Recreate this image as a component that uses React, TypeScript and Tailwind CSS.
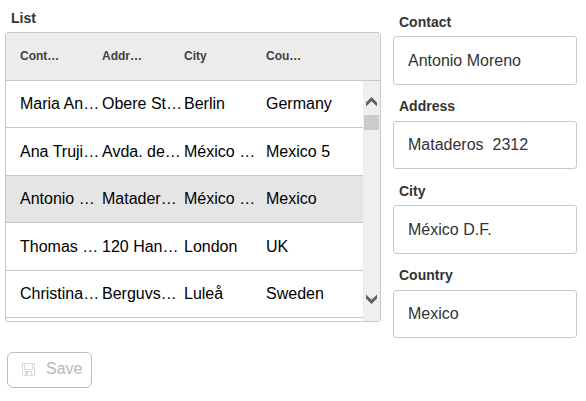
import React from "react";

type Row = { cells: string[]; height: string; selected?: boolean };

const columns = ["Cont…", "Addr…", "City", "Cou…"];

const rows: Row[] = [
  { cells: ["Maria An…", "Obere St…", "Berlin", "Germany"], height: "h-[47px]" },
  { cells: ["Ana Truji…", "Avda. de…", "México …", "Mexico 5"], height: "h-12" },
  { cells: ["Antonio …", "Matader…", "México …", "Mexico"], height: "h-[47px]", selected: true },
  { cells: ["Thomas …", "120 Han…", "London", "UK"], height: "h-12" },
  { cells: ["Christina…", "Berguvs…", "Luleå", "Sweden"], height: "h-[47px]" },
];

const fields = [
  { label: "Contact", value: "Antonio Moreno", labelGap: "mb-1.5", gap: "mb-[13px]", height: "h-[49px]" },
  { label: "Address", value: "Mataderos  2312", labelGap: "mb-[7px]", gap: "mb-3.5", height: "h-12" },
  { label: "City", value: "México D.F.", labelGap: "mb-1.5", gap: "mb-[13px]", height: "h-[49px]" },
  { label: "Country", value: "Mexico", labelGap: "mb-[7px]", gap: "", height: "h-12" },
];

function Chevron({ down = false }: { down?: boolean }) {
  return (
    <svg width="11" height="10" viewBox="0 0 11 10" className={down ? "rotate-180" : ""}>
      <path d="M0 5.6 5.5 0 11 5.6V9.6L5.5 4.3 0 9.6Z" fill="#606060" />
    </svg>
  );
}

function SaveIcon() {
  return (
    <svg width="13" height="13" viewBox="0 0 13 13" fill="none" stroke="#dcd8dc" shapeRendering="crispEdges" className="-mt-0.5">
      <path d="M0.5 0.5H12.5V12.5H1.5L0.5 11.5Z" />
      <path d="M2.5 1V6.5H10.5V1" />
      <path d="M3.5 12V8.5H9.5V12" />
      <path d="M5 9V12" strokeWidth="2" />
    </svg>
  );
}

function DataGrid() {
  return (
    <div className="flex h-[290px] w-[376px] flex-col overflow-hidden rounded-[3px] border border-[#c8c8c8] bg-white">
      <div className="flex h-12 shrink-0 items-center border-b border-[#c8c8c8] bg-[#ececec] pb-0.5 pl-3.5 text-xs font-bold text-[#404040]">
        {columns.map((c) => (
          <div key={c} className="w-[82px] whitespace-nowrap">{c}</div>
        ))}
      </div>
      <div className="flex min-h-0 flex-1">
        <div className="w-[357px]">
          {rows.map((r) => (
            <div
              key={r.cells[0]}
              className={`flex items-center border-b border-[#c8c8c8] pl-3.5 text-base leading-[18px] text-black ${r.height} ${r.selected ? "bg-[#e5e5e5]" : ""}`}
            >
              {r.cells.map((c, i) => (
                <div key={i} className="w-[82px] whitespace-nowrap">{c}</div>
              ))}
            </div>
          ))}
        </div>
        <div className="flex w-[17px] flex-col items-center bg-[#efefef] pt-4 pb-[17px]">
          <Chevron />
          <div className="mt-2 h-[15px] w-[15px] bg-[#cbcbcb]" />
          <div className="flex-1" />
          <Chevron down />
        </div>
      </div>
    </div>
  );
}

export default function App() {
  return (
    <div className="flex h-[401px] w-[586px] bg-white font-['Liberation_Sans',Arial,sans-serif] text-[#333]">
      <div className="ml-[5px] flex w-[376px] flex-col pt-[10px]">
        <div className="mb-1.5 pl-1.5 text-sm leading-4 font-bold">List</div>
        <DataGrid />
        <button className="mt-[30px] ml-0.5 flex h-9 w-[85px] items-center rounded-md border border-[#bdbdbd] bg-white pl-3.5 text-base leading-[18px] text-[#b8b8b8]">
          <SaveIcon />
          <span className="-mt-0.5 ml-[11px]">Save</span>
        </button>
      </div>
      <div className="ml-3 w-[184px] pt-3.5">
        {fields.map((f) => (
          <div key={f.label} className={f.gap}>
            <div className={`pl-1.5 text-sm leading-4 font-bold ${f.labelGap}`}>{f.label}</div>
            <div className={`flex items-center rounded-[3px] border border-[#c8c8c8] bg-white pl-3.5 text-base leading-[18px] whitespace-pre ${f.height}`}>
              {f.value}
            </div>
          </div>
        ))}
      </div>
    </div>
  );
}
